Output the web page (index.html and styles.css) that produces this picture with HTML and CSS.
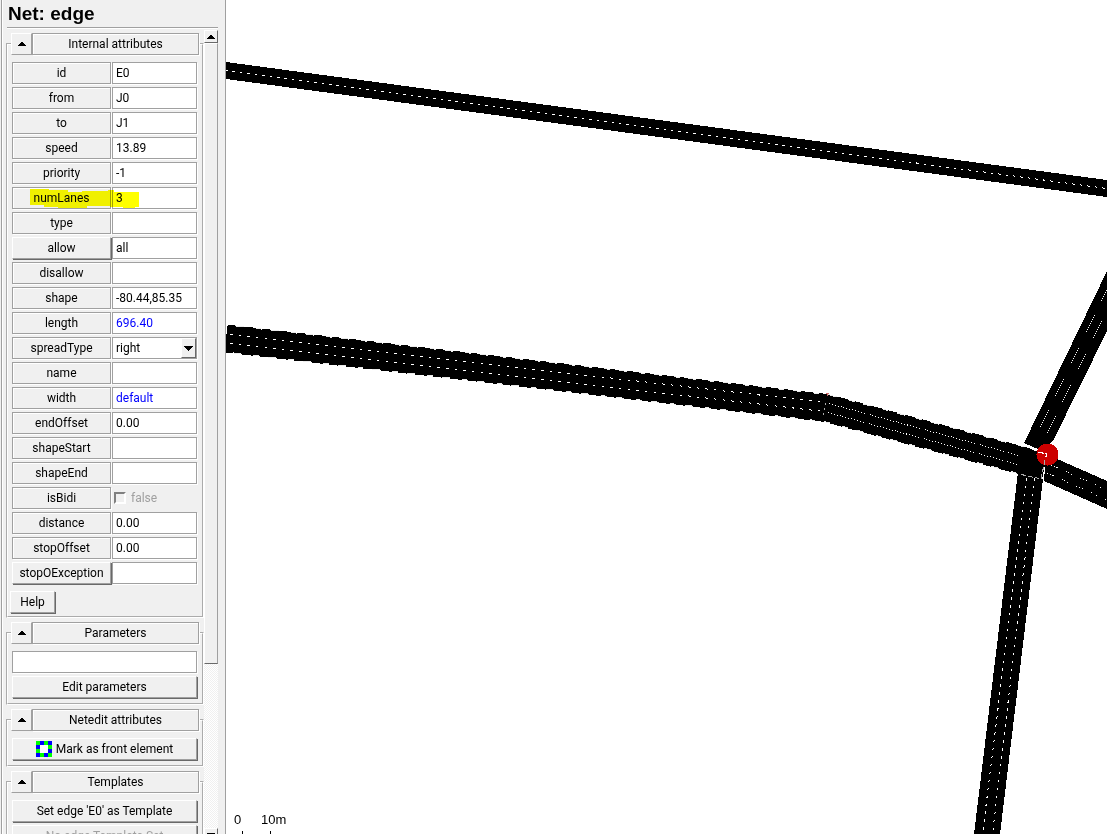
FILE: index.html
```html
<!DOCTYPE html>
<html lang="en">
<head>
  <meta charset="UTF-8" />
  <meta name="viewport" content="width=device-width, initial-scale=1.0" />
  <title>Net: edge</title>
  <link rel="stylesheet" href="styles.css">
</head>
<body>
  <aside class="sidebar">
    <h1>Net: edge</h1>
    <div class="scroll-area">
      <form class="frames">

        <fieldset class="group">
          <legend>
            <button type="button" class="fold" aria-label="Collapse internal attributes"><svg viewBox="0 0 8 4"><path d="M3 0h2v1h1v1h1v1h1v1H0V3h1V2h1V1h1z"/></svg></button>
            <span class="caption">Internal attributes</span>
          </legend>
          <div class="rows">
            <div class="row"><label for="id">id</label><input type="text" id="id" value="E0"></div>
            <div class="row"><label for="from">from</label><input type="text" id="from" value="J0"></div>
            <div class="row"><label for="to">to</label><input type="text" id="to" value="J1"></div>
            <div class="row"><label for="speed">speed</label><input type="text" id="speed" value="13.89"></div>
            <div class="row"><label for="priority">priority</label><input type="text" id="priority" value="-1"></div>
            <div class="row marked">
              <label for="numLanes">numLanes</label><input type="text" id="numLanes" value="3">
              <svg class="marker" viewBox="0 0 110 20"><path d="M0 0h18l2 1h18v2h14V2h26V1h6v2h25v15h-4v1H93v-1H80v-1H57v2H28v-1H14v-2H0z"/></svg>
            </div>
            <div class="row"><label for="type">type</label><input type="text" id="type"></div>
            <div class="row"><button type="button" class="raised">allow</button><input type="text" aria-label="allow" value="all"></div>
            <div class="row"><label for="disallow">disallow</label><input type="text" id="disallow"></div>
            <div class="row"><label for="shape">shape</label><input type="text" id="shape" value="-80.44,85.35"></div>
            <div class="row"><label for="length">length</label><input type="text" id="length" class="computed" value="696.40"></div>
            <div class="row">
              <label for="spreadType">spreadType</label>
              <div class="combo">
                <select id="spreadType"><option>right</option><option>center</option><option>roadCenter</option></select>
                <span class="drop"><svg viewBox="0 0 9 5"><path d="M0 0h9v1H8v1H7v1H6v1H5v1H4V4H3V3H2V2H1V1H0z"/></svg></span>
              </div>
            </div>
            <div class="row"><label for="name">name</label><input type="text" id="name"></div>
            <div class="row"><label for="width">width</label><input type="text" id="width" class="computed" value="default"></div>
            <div class="row"><label for="endOffset">endOffset</label><input type="text" id="endOffset" value="0.00"></div>
            <div class="row"><label for="shapeStart">shapeStart</label><input type="text" id="shapeStart"></div>
            <div class="row"><label for="shapeEnd">shapeEnd</label><input type="text" id="shapeEnd"></div>
            <div class="row"><label for="isBidi">isBidi</label><div class="check"><input type="checkbox" id="isBidi" disabled><span>false</span></div></div>
            <div class="row"><label for="distance">distance</label><input type="text" id="distance" value="0.00"></div>
            <div class="row"><label for="stopOffset">stopOffset</label><input type="text" id="stopOffset" value="0.00"></div>
            <div class="row"><button type="button" class="raised">stopOException</button><input type="text" aria-label="stopOException"></div>
          </div>
          <button type="button" class="raised help">Help</button>
        </fieldset>

        <fieldset class="group">
          <legend>
            <button type="button" class="fold" aria-label="Collapse parameters"><svg viewBox="0 0 8 4"><path d="M3 0h2v1h1v1h1v1h1v1H0V3h1V2h1V1h1z"/></svg></button>
            <span class="caption">Parameters</span>
          </legend>
          <div class="stack">
            <input type="text" aria-label="Parameters">
            <button type="button" class="raised">Edit parameters</button>
          </div>
        </fieldset>

        <fieldset class="group">
          <legend>
            <button type="button" class="fold" aria-label="Collapse netedit attributes"><svg viewBox="0 0 8 4"><path d="M3 0h2v1h1v1h1v1h1v1H0V3h1V2h1V1h1z"/></svg></button>
            <span class="caption">Netedit attributes</span>
          </legend>
          <div class="stack">
            <button type="button" class="raised">
              <svg class="front" viewBox="0 0 16 16"><path fill="#0f0" d="M0 0h16v16H0z"/><path fill="#00f" d="M4 0h4v4H4zM12 0h4v4h-4zM0 4h4v4H0zM12 8h4v4h-4zM0 12h4v4H0zM8 12h4v4H8z"/><path fill="#fff" d="M4 4h8v8H4z"/></svg>
              Mark as front element
            </button>
          </div>
        </fieldset>

        <fieldset class="group">
          <legend>
            <button type="button" class="fold" aria-label="Collapse templates"><svg viewBox="0 0 8 4"><path d="M3 0h2v1h1v1h1v1h1v1H0V3h1V2h1V1h1z"/></svg></button>
            <span class="caption">Templates</span>
          </legend>
          <div class="stack">
            <button type="button" class="raised">Set edge 'E0' as Template</button>
            <button type="button" class="raised" disabled>No edge Template Set</button>
          </div>
        </fieldset>

      </form>
      <div class="scrollbar">
        <button type="button" class="arrow" aria-label="Scroll up"><svg viewBox="0 0 8 4"><path d="M3 0h2v1h1v1h1v1h1v1H0V3h1V2h1V1h1z"/></svg></button>
        <div class="thumb"></div>
        <div class="track"></div>
        <button type="button" class="arrow" aria-label="Scroll down"><svg viewBox="0 0 8 4"><path d="M0 0h8v1H7v1H6v1H5v1H3V3H2V2H1V1H0z"/></svg></button>
      </div>
    </div>
  </aside>

  <main class="view">
    <svg class="network" viewBox="226 0 881 834" preserveAspectRatio="xMinYMin slice">
      <!-- upper road, two lanes -->
      <path d="M226 62L1107 180V197L226 79z"/>
      <path class="lane" stroke-dasharray="2.5 5" d="M225 70.500L1107 188.500"/>

      <!-- north-east road -->
      <path d="M1024 443L1107 271V331L1053 441L1040 451z"/>
      <path class="lane" stroke-dasharray="1 1.200" d="M1040 427L1049 409M1055 396L1064 378M1071 363L1079 347M1086 332L1095 314M1101 301L1107 290M1047 433L1056 415M1062 402L1071 384M1078 369L1086 353M1093 338L1102 320"/>

      <!-- south road -->
      <path d="M1018 472L1043 479L1000 834H974z"/>
      <path class="lane" stroke-dasharray="2.500 5.500" d="M1026.500 478L982.500 834M1034.500 478L992.500 834"/>

      <!-- south-east road -->
      <path d="M1046 454L1107 481V509L1044 481z"/>
      <path class="lane" stroke-dasharray="1 2 1 2 1 9" d="M1051 465L1107 490M1047 473L1107 500"/>

      <!-- selected edge E0, three lanes -->
      <path class="halo" d="M226 338.500L826 408L1031 463"/>
      <path class="edge" d="M226 338.500L826 408L1031 463"/>
      <path class="bumps" d="M226 338.500L826 408L1031 463"/>
      <path class="lane" stroke-dasharray="2.500 6.200" d="M230 334.500L825 402.500M230 343.500L824 411.500"/>
      <path class="lane" stroke-dasharray="1 2" d="M829 403.500L1019 455.500M828 412.500L1018 464.500"/>
      <path class="lane faint" stroke-dasharray="2 3" d="M826 403L823 417"/>
      <path fill="#c66" d="M826 393h3v1h-1v2h-1v-2h-1z"/>

      <!-- junction J1 -->
      <path d="M1019 446L1036 450L1047 454L1042 480L1018 474z"/>
      <path fill="#fff" d="M1024 443L1038 449V452L1024 446z"/>
      <circle cx="1047.500" cy="454.500" r="11" fill="#c00"/>
      <path class="lane" stroke-dasharray="6 1" d="M1038 452L1047 454L1045 459"/>
      <path class="lane faint" stroke-dasharray="5 2" d="M1045 460L1041 479L1019 474"/>

      <!-- scale -->
      <text x="234" y="824">0</text>
      <text x="261" y="824">10m</text>
      <path d="M242 831h1v3h-1zM270 831h1v3h-1z"/>
    </svg>
  </main>
</body>
</html>
```

FILE: styles.css
```css
*{box-sizing:border-box}
body{margin:0;height:100vh;display:flex;overflow:hidden;background:#fff;color:#000;font:12px/16px Roboto,"Noto Sans CJK KR",sans-serif}
button,input,select{font:inherit;color:inherit;border-radius:0;margin:0}
svg{display:block;shape-rendering:crispEdges}

/* sidebar */
.sidebar{flex:none;width:226px;display:flex;flex-direction:column;padding-left:2px;background:#f0f0f0;border-right:1px solid #a0a0a0;box-shadow:inset 1px 0 #f0f0f0,inset 2px 0 #a0a0a0,inset 3px 0 #fff}
h1{margin:0 7px 0 5px;height:28px;font:bold 19px/28px "Liberation Sans",Arial,sans-serif;padding-left:1px;border-bottom:1px solid #a0a0a0;box-shadow:0 1px #fff}
.scroll-area{flex:1;min-height:0;display:flex;padding:2px 7px 0 4px}
.frames{flex:1;min-width:0;overflow:hidden;padding-top:3px}

/* group boxes */
.group{margin:0 0 4px;padding:0 3px 3px;border:2px groove #fff;min-width:0}
.group legend{display:flex;width:188px;padding:0}
.fold{width:21px;height:22px;padding:0;display:flex;align-items:center;justify-content:center;background:#f0f0f0;border:1px solid;border-color:#fff #a0a0a0 #a0a0a0 #fff}
.fold svg,.arrow svg{flex:none;width:8px;height:4px}
.caption{flex:1;height:22px;line-height:20px;text-align:center;border:1px solid #a0a0a0;box-shadow:1px 1px #fff,inset 1px 1px #fff}
.rows{display:flex;flex-direction:column;gap:3px;padding:7px 2px 0 1px}
.row{display:grid;grid-template-columns:99px 1fr;gap:1px;height:22px}
.row label{border:1px solid #a0a0a0;box-shadow:1px 1px #fff,inset 1px 1px #fff;text-align:center;line-height:20px}
input[type=text]{width:100%;min-width:0;height:22px;padding:0 3px;border:1px solid #a0a0a0;background:#fff;box-shadow:1px 1px #fff;outline:none}
input.computed{color:#00f}
.raised{height:22px;padding:0;display:flex;align-items:center;justify-content:center;gap:4px;background:#f0f0f0;border:1px solid;border-color:#fff #a0a0a0 #a0a0a0 #fff;box-shadow:1px 1px #696969;position:relative}
.raised:disabled{color:#a0a0a0}
.help{width:45px;margin:7px 0 0 -1px}
.stack{display:flex;flex-direction:column;gap:3px;padding:7px 2px 2px 1px}
.front{width:16px;height:16px}

/* drop-down and tick box */
.combo{display:flex;border:1px solid #a0a0a0;background:#fff;box-shadow:1px 1px #fff}
.combo select{flex:1;min-width:0;appearance:none;border:0;padding:0 3px;background:none;outline:none}
.drop{width:15px;display:flex;align-items:center;justify-content:center;background:#f0f0f0;border:1px solid;border-color:#fff #696969 #696969 #fff;pointer-events:none}
.drop svg{flex:none;width:9px;height:5px}
.check{display:flex;align-items:center;gap:5px;padding-left:2px;color:#a0a0a0}
.check input{appearance:none;width:12px;height:12px;background:#f0f0f0;border:2px solid;border-color:#808080 #fff #fff #808080}

/* highlighter stroke over numLanes */
.marked{position:relative}
.marker{position:absolute;left:18px;top:2px;width:110px;height:20px;fill:#ff0;mix-blend-mode:multiply;pointer-events:none}

/* scrollbar */
.scrollbar{flex:none;width:14px;display:flex;flex-direction:column}
.arrow{flex:none;width:14px;height:13px;padding:0;display:flex;align-items:center;justify-content:center;background:#f0f0f0;border:1px solid;border-color:#fff #696969 #696969 #fff}
.thumb{flex:79;border:1px solid;border-color:#fff #a0a0a0 #696969 #fff}
.track{flex:21;background:repeating-conic-gradient(#fff 0 25%,#f0f0f0 0 50%) 0 0/2px 2px}
.scrollbar .arrow:last-child{margin-bottom:-7px}

/* map */
.view{flex:1;min-width:0}
.network{width:100%;height:100%}
.network text{font:13px "Liberation Sans",Arial,sans-serif}
.lane{fill:none;stroke:#fff;stroke-width:1}
.faint{stroke:#aaa}
.halo{fill:none;stroke:#ebebeb;stroke-width:28}
.edge{fill:none;stroke:#000;stroke-width:26}
.bumps{fill:none;stroke:#000;stroke-width:28;stroke-dasharray:9 8 12 6}
```
